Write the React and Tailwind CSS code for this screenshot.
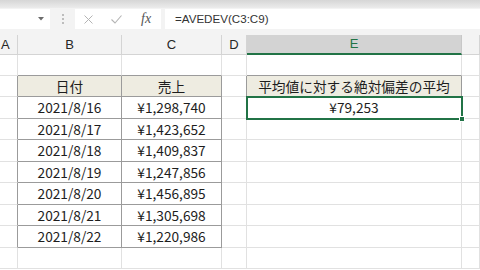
import React from 'react';

const widths = ['w-[18px]', 'w-[104px]', 'w-[100px]', 'w-[25px]', 'w-[215px]', 'w-[18px]'];
// F is wide in the sheet, so its letter is off-screen
const letters = ['A', 'B', 'C', 'D', 'E', ''];
const heights = ['h-[21px]', 'h-[21px]', 'h-[22px]', 'h-[21px]', 'h-[22px]', 'h-[21px]', 'h-[22px]', 'h-[21px]', 'h-[22px]', 'h-[21px]'];

const data = [
  ['2021/8/16', '¥1,298,740'],
  ['2021/8/17', '¥1,423,652'],
  ['2021/8/18', '¥1,409,837'],
  ['2021/8/19', '¥1,247,856'],
  ['2021/8/20', '¥1,456,895'],
  ['2021/8/21', '¥1,305,698'],
  ['2021/8/22', '¥1,220,986'],
];

const LIGHT_R = 'border-r-[#e1e1e1]';
const LIGHT_B = 'border-b-[#e1e1e1]';
const DARK_R = 'border-r-[#9b9b9b]';
const DARK_B = 'border-b-[#9b9b9b]';

function Cell({ w, r = LIGHT_R, b = LIGHT_B, fill = 'bg-white', extra = '', children }) {
  return (
    <div className={`${w} h-full shrink-0 border-r border-b ${r} ${b} ${fill} ${extra} flex items-center justify-center text-[13.7px] text-[#1d1d1d] whitespace-nowrap`}>
      {children}
    </div>
  );
}

function FormulaBar() {
  return (
    <div className="h-[30px] bg-[#f3f3f3]">
      <div className="h-[8px] bg-gradient-to-b from-[#d6d6d6] to-[#ececec]" />
      <div className="flex h-[20px] mt-[1px] items-stretch">
        <div className="w-[50px] bg-white flex items-center justify-end pr-[6px]">
          <svg width="6" height="4" viewBox="0 0 6 4"><path d="M0 0h6L3 3.5z" fill="#6b6b6b" /></svg>
        </div>
        <div className="w-[25px] flex flex-col items-center justify-center gap-[2px]">
          <span className="w-[2px] h-[2px] bg-[#bdbdbd]" />
          <span className="w-[2px] h-[2px] bg-[#bdbdbd]" />
          <span className="w-[2px] h-[2px] bg-[#bdbdbd]" />
        </div>
        <div className="w-[86px] bg-white flex items-center">
          <svg className="ml-[9px]" width="9" height="9" viewBox="0 0 9 9">
            <path d="M0.5 0.5l8 8M8.5 0.5l-8 8" stroke="#b4b4b4" strokeWidth="1" />
          </svg>
          <svg className="ml-[18px]" width="11" height="9" viewBox="0 0 11 9">
            <path d="M0.5 4.5l3.5 3.5 6.5-7.5" stroke="#b4b4b4" strokeWidth="1.1" fill="none" />
          </svg>
          <span className="ml-[19px] font-['Liberation_Serif',serif] italic text-[14px] text-[#555] leading-none">fx</span>
        </div>
        <div className="w-[4px]" />
        <div className="flex-1 bg-white flex items-center pl-[10px] font-['Liberation_Sans',sans-serif] text-[11.6px] text-[#333]">
          =AVEDEV(C3:C9)
        </div>
      </div>
    </div>
  );
}

function HeaderRow() {
  return (
    <div className="flex h-[25px] bg-[#f3f3f3] pt-[5px] font-['Liberation_Sans',sans-serif]">
      {letters.map((l, i) =>
        i === 4 ? (
          <div key={i} className={`${widths[i]} h-full shrink-0 bg-[#d3d3d3] border-b-2 border-b-[#217346] border-r border-r-[#c8c8c8] flex items-center justify-center text-[13px] text-[#217346]`}>
            {l}
          </div>
        ) : (
          <div key={i} className={`${widths[i]} h-full shrink-0 border-b border-b-[#d4d4d4] border-r border-r-[#d4d4d4] flex items-center justify-center text-[13px] text-[#262626] ${i === 0 ? 'justify-start pl-[1px]' : ''}`}>
            {l}
          </div>
        )
      )}
    </div>
  );
}

export default function App() {
  return (
    <div className="w-[480px] h-[270px] overflow-hidden bg-white">
      <FormulaBar />
      <HeaderRow />
      <div className="font-['Noto_Sans_CJK_JP',sans-serif]">
        {/* row 1 */}
        <div className={`flex ${heights[0]}`}>
          <Cell w={widths[0]} />
          <Cell w={widths[1]} b={DARK_B} />
          <Cell w={widths[2]} b={DARK_B} />
          <Cell w={widths[3]} />
          <Cell w={widths[4]} b={DARK_B} />
          <Cell w={widths[5]} />
        </div>
        {/* row 2: table headers */}
        <div className={`flex ${heights[1]}`}>
          <Cell w={widths[0]} r={DARK_R} />
          <Cell w={widths[1]} r={DARK_R} b={DARK_B} fill="bg-[#eeece1]">日付</Cell>
          <Cell w={widths[2]} r={DARK_R} b={DARK_B} fill="bg-[#eeece1]">売上</Cell>
          <Cell w={widths[3]} r={DARK_R} />
          <Cell w={widths[4]} r={DARK_R} b={DARK_B} fill="bg-[#eeece1]">平均値に対する絶対偏差の平均</Cell>
          <Cell w={widths[5]} />
        </div>
        {data.map(([d, v], i) => (
          <div key={d} className={`flex ${heights[i + 2]}`}>
            <Cell w={widths[0]} r={DARK_R} />
            <Cell w={widths[1]} r={DARK_R} b={DARK_B}>{d}</Cell>
            <Cell w={widths[2]} r={DARK_R} b={DARK_B}>{v}</Cell>
            <Cell w={widths[3]} />
            {i === 0 ? (
              <Cell w={widths[4]} extra="relative z-10 outline-2 outline-[#217346] -outline-offset-1">
                ¥79,253
                <span className="absolute right-[-4px] bottom-[-4px] w-[6px] h-[6px] bg-[#217346] border border-white" />
              </Cell>
            ) : (
              <Cell w={widths[4]} />
            )}
            <Cell w={widths[5]} />
          </div>
        ))}
        <div className={`flex ${heights[9]}`}>
          {widths.map((w, i) => (
            <Cell key={i} w={w} />
          ))}
        </div>
      </div>
    </div>
  );
}
